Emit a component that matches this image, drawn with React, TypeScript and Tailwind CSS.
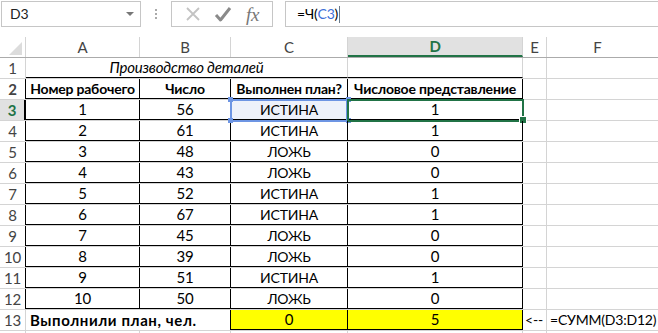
const COLS = [
  { key: "A", w: "w-[114px]" },
  { key: "B", w: "w-[91px]" },
  { key: "C", w: "w-[117px]" },
  { key: "D", w: "w-[175px]" },
  { key: "E", w: "w-[24px]" },
];

const rows = [
  [1, 56, true],
  [2, 61, true],
  [3, 48, false],
  [4, 43, false],
  [5, 52, true],
  [6, 67, true],
  [7, 45, false],
  [8, 39, false],
  [9, 51, true],
  [10, 50, false],
] as const;

function RowHead({ n, edge = "border-r-[#d4d4d4]", active = false }: { n: number; edge?: string; active?: boolean }) {
  return (
    <div
      className={`w-[26px] shrink-0 h-full flex items-center justify-center border-r text-[15px] ${edge} ${
        active ? "bg-[#e1e1e1] text-[#217346] font-bold border-r-2 border-r-[#217346]" : "text-[#444]"
      }`}
    >
      {n}
    </div>
  );
}

export default function App() {
  return (
    <div className="w-[658px] h-[333px] overflow-hidden bg-white text-[14px] tracking-[-0.2px] text-black font-['Lato',sans-serif] leading-none select-none whitespace-nowrap">
      {/* Formula bar */}
      <div className="h-[37px] flex items-start pt-[1px] pl-[1px]">
        <div className="w-[140px] h-[26px] border border-[#c6c6c6] flex items-center justify-between pl-[8px] pr-[6px] text-[14px] text-[#222]">
          <span>D3</span>
          <span className="w-0 h-0 border-l-[4px] border-r-[4px] border-t-[4px] border-l-transparent border-r-transparent border-t-[#777]" />
        </div>
        <div className="w-[30px] h-[26px] flex flex-col items-center justify-center gap-[2px]">
          <span className="w-[2px] h-[2px] bg-[#aaa]" />
          <span className="w-[2px] h-[2px] bg-[#aaa]" />
          <span className="w-[2px] h-[2px] bg-[#aaa]" />
        </div>
        <div className="w-[102px] h-[26px] border border-[#c6c6c6] flex items-center justify-around px-[6px]">
          <svg width="16" height="16" viewBox="0 0 16 16">
            <path d="M2 2 L14 14 M14 2 L2 14" stroke="#c3c3c3" strokeWidth="1.8" />
          </svg>
          <svg width="18" height="16" viewBox="0 0 18 16">
            <path d="M2 9 L6.5 14 L16 2" stroke="#8a8a8a" strokeWidth="3" fill="none" strokeLinejoin="round" />
          </svg>
          <span className="font-['Liberation_Serif',serif] italic text-[19px] text-[#777]">fx</span>
        </div>
        <div className="w-[12px]" />
        <div className="flex-1 h-[26px] border border-[#c6c6c6] border-r-0 flex items-center pl-[11px] text-[14px]">
          <span>=Ч(</span>
          <span className="text-[#3e6fd8]">C3</span>
          <span>)</span>
          <span className="w-[1px] h-[17px] bg-[#6a7a8a] ml-[1px]" />
        </div>
      </div>

      {/* Column headers */}
      <div className="h-[21px] flex border-b border-b-[#ababab] text-[#444] text-[15px]">
        <div className="w-[26px] shrink-0 h-full border-r border-r-[#d4d4d4] relative">
          <svg className="absolute right-[3px] bottom-[2px]" width="13" height="13" viewBox="0 0 13 13">
            <path d="M13 0 L13 13 L0 13 Z" fill="#dcdcdc" />
          </svg>
        </div>
        {COLS.map((c) =>
          c.key === "D" ? (
            <div
              key={c.key}
              className={`${c.w} shrink-0 h-full flex items-center justify-center bg-[#e1e1e1] text-[#217346] font-bold border-r border-r-[#d4d4d4] border-b-2 border-b-[#217346] -mb-[1px]`}
            >
              D
            </div>
          ) : (
            <div key={c.key} className={`${c.w} shrink-0 h-full flex items-center justify-center border-r border-r-[#d4d4d4]`}>
              {c.key}
            </div>
          )
        )}
        <div className="flex-1 flex items-center justify-center pr-[10px]">F</div>
      </div>

      {/* Row 1 */}
      <div className="h-[21px] flex border-b border-b-[#d4d4d4]">
        <RowHead n={1} />
        <div className="w-[322px] shrink-0 h-full flex items-center justify-center italic text-[15px] border-r border-r-[#d4d4d4] border-b border-b-black -mb-[1px]">
          Производство деталей
        </div>
        <div className="w-[175px] shrink-0 h-full border-r border-r-[#d4d4d4] border-b border-b-black -mb-[1px]" />
        <div className="w-[24px] shrink-0 h-full border-r border-r-[#d4d4d4]" />
        <div className="flex-1" />
      </div>

      {/* Row 2 */}
      <div className="h-[21px] flex border-b border-b-[#d4d4d4] font-bold">
        <RowHead n={2} edge="border-r-black" />
        <div className="w-[114px] shrink-0 h-full flex items-center justify-center border-r border-r-black border-b border-b-black -mb-[1px]">
          Номер рабочего
        </div>
        <div className="w-[91px] shrink-0 h-full flex items-center justify-center border-r border-r-black border-b border-b-black -mb-[1px]">
          Число
        </div>
        <div className="w-[117px] shrink-0 h-full flex items-center justify-center border-r border-r-black border-b border-b-black -mb-[1px]">
          Выполнен план?
        </div>
        <div className="w-[175px] shrink-0 h-full flex items-center justify-center border-r border-r-black border-b border-b-black -mb-[1px]">
          Числовое представление
        </div>
        <div className="w-[24px] shrink-0 h-full border-r border-r-[#d4d4d4]" />
        <div className="flex-1" />
      </div>

      {/* Rows 3-12 */}
      {rows.map(([n, v, ok], i) => (
        <div key={n} className="h-[21px] flex border-b border-b-[#d4d4d4] text-[15px]">
          <RowHead n={i + 3} edge="border-r-black" active={i === 0} />
          <div className="w-[114px] shrink-0 h-full flex items-center justify-center border-r border-r-black border-b border-b-black -mb-[1px]">
            {n}
          </div>
          <div className="w-[91px] shrink-0 h-full flex items-center justify-center border-r border-r-black border-b border-b-black -mb-[1px]">
            {v}
          </div>
          <div
            className={`w-[117px] shrink-0 h-full flex items-center justify-center text-[14px] border-r border-r-black border-b border-b-black -mb-[1px] relative ${
              i === 0 ? "bg-[#edf1fa]" : ""
            }`}
          >
            {ok ? "ИСТИНА" : "ЛОЖЬ"}
            {i === 0 && (
              <>
                <div className="absolute -left-[1px] -top-[1px] w-[118px] h-[23px] border-2 border-[#6d95e3]" />
                <span className="absolute -left-[3px] -top-[3px] w-[5px] h-[5px] bg-[#6d95e3]" />
                <span className="absolute right-[-4px] -top-[3px] w-[5px] h-[5px] bg-[#6d95e3]" />
                <span className="absolute -left-[3px] bottom-[-4px] w-[5px] h-[5px] bg-[#6d95e3]" />
                <span className="absolute right-[-4px] bottom-[-4px] w-[5px] h-[5px] bg-[#6d95e3]" />
              </>
            )}
          </div>
          <div className="w-[175px] shrink-0 h-full flex items-center justify-center border-r border-r-black border-b border-b-black -mb-[1px] relative">
            {ok ? 1 : 0}
            {i === 0 && (
              <>
                <div className="absolute -left-[1px] -top-[1px] w-[177px] h-[23px] border-2 border-[#217346]" />
                <span className="absolute right-[-4px] bottom-[-4px] w-[6px] h-[6px] bg-[#217346] outline outline-1 outline-white" />
              </>
            )}
          </div>
          <div className="w-[24px] shrink-0 h-full border-r border-r-[#d4d4d4]" />
          <div className="flex-1" />
        </div>
      ))}

      {/* Row 13 */}
      <div className="h-[21px] flex border-b border-b-[#d4d4d4]">
        <RowHead n={13} />
        <div className="w-[205px] shrink-0 h-full flex items-center pl-[4px] font-bold text-[15px] tracking-[0.6px] border-r border-r-black">
          Выполнили план, чел.
        </div>
        <div className="w-[117px] shrink-0 h-full flex items-center justify-center text-[15px] bg-[#ffff00] border-r border-r-black border-b border-b-black -mb-[1px]">
          0
        </div>
        <div className="w-[175px] shrink-0 h-full flex items-center justify-center text-[15px] bg-[#ffff00] border-r border-r-black border-b border-b-black -mb-[1px]">
          5
        </div>
        <div className="w-[24px] shrink-0 h-full flex items-center pl-[2px] border-r border-r-[#d4d4d4]">
          &lt;--
        </div>
        <div className="flex-1 flex items-center pl-[3px]">=СУММ(D3:D12)</div>
      </div>

      {/* Row 14 (partial) */}
      <div className="h-[21px] flex">
        <div className="w-[26px] shrink-0 h-full border-r border-r-[#d4d4d4]" />
        <div className="w-[114px] shrink-0 h-full border-r border-r-[#d4d4d4]" />
        <div className="w-[91px] shrink-0 h-full border-r border-r-[#d4d4d4]" />
        <div className="w-[117px] shrink-0 h-full border-r border-r-[#d4d4d4]" />
        <div className="w-[175px] shrink-0 h-full border-r border-r-[#d4d4d4]" />
        <div className="w-[24px] shrink-0 h-full border-r border-r-[#d4d4d4]" />
      </div>
    </div>
  );
}
